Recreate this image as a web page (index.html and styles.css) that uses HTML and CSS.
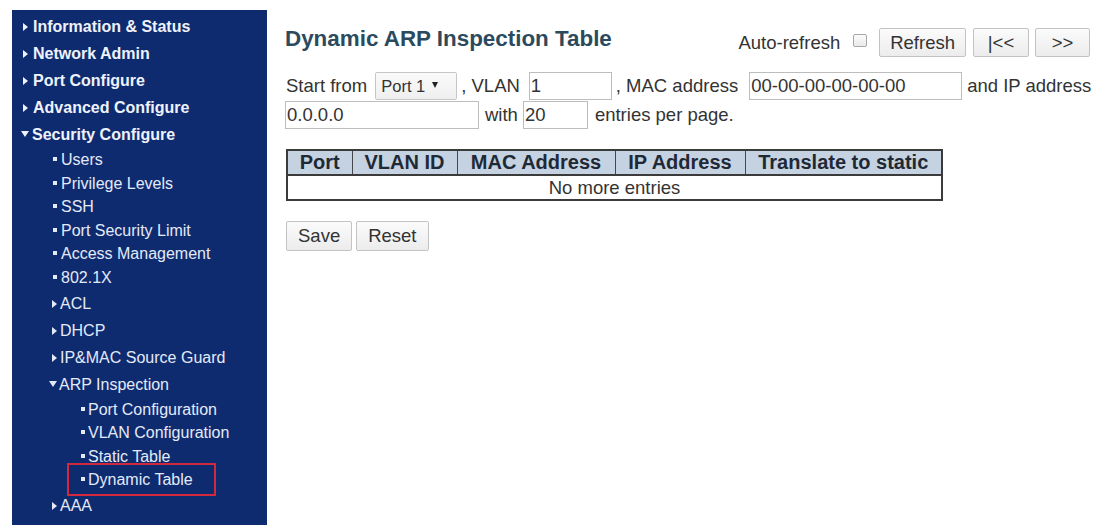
FILE: index.html
```html
<!DOCTYPE html>
<html lang="en">
<head>
<meta charset="utf-8">
<title>Dynamic ARP Inspection Table</title>
<link rel="stylesheet" href="styles.css">
</head>
<body>
<div class="page">
  <nav class="sidebar">
    <ul class="menu">
      <li><div class="row top closed">Information &amp; Status</div></li>
      <li><div class="row top closed">Network Admin</div></li>
      <li><div class="row top closed">Port Configure</div></li>
      <li><div class="row top closed">Advanced Configure</div></li>
      <li>
        <div class="row top open">Security Configure</div>
        <ul class="sub">
          <li><div class="row leaf2">Users</div></li>
          <li><div class="row leaf2">Privilege Levels</div></li>
          <li><div class="row leaf2">SSH</div></li>
          <li><div class="row leaf2">Port Security Limit</div></li>
          <li><div class="row leaf2">Access Management</div></li>
          <li><div class="row leaf2">802.1X</div></li>
          <li><div class="row folder closed">ACL</div></li>
          <li><div class="row folder closed">DHCP</div></li>
          <li><div class="row folder closed">IP&amp;MAC Source Guard</div></li>
          <li>
            <div class="row folder open">ARP Inspection</div>
            <ul class="sub3">
              <li><div class="row leaf3">Port Configuration</div></li>
              <li><div class="row leaf3">VLAN Configuration</div></li>
              <li><div class="row leaf3">Static Table</div></li>
              <li><div class="row leaf3 current">Dynamic Table</div></li>
            </ul>
          </li>
          <li><div class="row folder closed">AAA</div></li>
        </ul>
      </li>
    </ul>
  </nav>

  <main class="main">
    <div class="title-row">
      <h1 class="title">Dynamic ARP Inspection Table</h1>
      <div class="controls">
        <span class="auto-label">Auto-refresh</span>
        <input type="checkbox" class="check">
        <button class="btn btn-refresh">Refresh</button>
        <button class="btn btn-first">|&lt;&lt;</button>
        <button class="btn btn-next">&gt;&gt;</button>
      </div>
    </div>

    <div class="filter-row first-row">
      <span class="lbl lbl-start">Start from</span>
      <span class="select-wrap"><select class="sel"><option>Port 1</option></select></span>
      <span class="lbl lbl-vlan">, VLAN</span>
      <input class="field f-vlan" type="text" value="1">
      <span class="lbl lbl-mac">, MAC address</span>
      <input class="field f-mac" type="text" value="00-00-00-00-00-00">
      <span class="lbl lbl-ip">and IP address</span>
    </div>
    <div class="filter-row">
      <input class="field f-ip" type="text" value="0.0.0.0">
      <span class="lbl lbl-with">with</span>
      <input class="field f-count" type="text" value="20">
      <span class="lbl lbl-per">entries per page.</span>
    </div>

    <table class="arp-table">
      <colgroup>
        <col class="c-port">
        <col class="c-vlan">
        <col class="c-mac">
        <col class="c-ip">
        <col class="c-static">
      </colgroup>
      <thead>
        <tr><th>Port</th><th>VLAN ID</th><th>MAC Address</th><th>IP Address</th><th>Translate to static</th></tr>
      </thead>
      <tbody>
        <tr><td class="empty" colspan="5">No more entries</td></tr>
      </tbody>
    </table>

    <div class="actions">
      <button class="btn btn-big">Save</button>
      <button class="btn btn-big">Reset</button>
    </div>
  </main>
</div>
</body>
</html>
```

FILE: styles.css
```css
html, body {
  margin: 0;
  background: #ffffff;
}

body {
  font-family: "Liberation Sans", Arial, sans-serif;
  color: #333333;
}

.page {
  display: flex;
  align-items: flex-start;
  padding: 10px 0 0 12px;
}

/* ---------- sidebar ---------- */
.sidebar {
  width: 255px;
  background: #0f2b70;
  padding: 3px 0 6px;
}

.menu,
.menu ul {
  list-style: none;
  margin: 0;
  padding: 0;
}

.sub {
  padding-top: 2px;
}

.row {
  display: block;
  white-space: nowrap;
  font-size: 16px;
  color: #e3eaf7;
}

.row::before {
  content: "";
  display: inline-block;
}

.row.top {
  height: 27px;
  line-height: 27px;
  font-weight: bold;
  color: #eef2fb;
}

.row.top.closed {
  padding-left: 11px;
}
.row.top.closed::before,
.row.folder.closed::before {
  width: 0;
  height: 0;
  border-left: 5px solid currentColor;
  border-top: 4.5px solid transparent;
  border-bottom: 4.5px solid transparent;
  vertical-align: 1px;
}
.row.top.closed::before {
  margin-right: 5px;
}

.row.top.open {
  padding-left: 9px;
}
.row.top.open::before,
.row.folder.open::before {
  width: 0;
  height: 0;
  border-top: 6px solid currentColor;
  border-left: 4.5px solid transparent;
  border-right: 4.5px solid transparent;
  vertical-align: 3px;
}
.row.top.open::before {
  margin-right: 3px;
}

.row.leaf2,
.row.leaf3 {
  height: 23.6px;
  line-height: 23.6px;
}
.row.leaf2 {
  padding-left: 41px;
}
.row.leaf2::before,
.row.leaf3::before {
  width: 4px;
  height: 4px;
  background: currentColor;
  vertical-align: 4px;
}
.row.leaf2::before {
  margin-right: 4px;
}

.row.folder {
  height: 27px;
  line-height: 27px;
}
.row.folder.closed {
  padding-left: 40px;
}
.row.folder.closed::before {
  margin-right: 3px;
}
.row.folder.open {
  padding-left: 37px;
}
.row.folder.open::before {
  margin-right: 2px;
}

.row.leaf3 {
  padding-left: 69px;
}
.row.leaf3::before {
  margin-right: 3px;
}

.row.current {
  position: relative;
}
.row.current::after {
  content: "";
  position: absolute;
  left: 55px;
  top: -5px;
  width: 149px;
  height: 33px;
  box-sizing: border-box;
  border: 2px solid #d3293f;
}

/* ---------- main ---------- */
.main {
  width: 808px;
  margin-left: 18px;
  font-size: 18.5px;
}

.title-row {
  display: flex;
  justify-content: space-between;
  align-items: flex-start;
  height: 29px;
  margin-top: 18px;
}

.title {
  margin: 0;
  font-size: 22.4px;
  line-height: 22px;
  font-weight: bold;
  color: #2c4a5e;
}

.controls {
  display: flex;
  align-items: center;
  height: 29px;
  margin-right: 3px;
}

.auto-label {
  line-height: 29px;
}

.check {
  appearance: none;
  -webkit-appearance: none;
  align-self: flex-start;
  width: 14px;
  height: 13px;
  box-sizing: border-box;
  margin: 6px 12px 0 13px;
  border: 1px solid #a8a8a8;
  border-radius: 2px;
  background: linear-gradient(#fbfbfb, #e9e9e9);
}

.btn {
  height: 29px;
  box-sizing: border-box;
  padding: 0 11px;
  font-family: "Liberation Sans", Arial, sans-serif;
  font-size: 18.5px;
  color: #333333;
  background: linear-gradient(#fbfbfb, #ececec);
  border: 1px solid #c3c3c3;
  border-radius: 2px;
}

.btn-refresh {
  padding: 0 10px;
}
.btn-first {
  width: 56px;
  padding: 0;
  margin-left: 7px;
}
.btn-next {
  width: 55px;
  padding: 0;
  margin-left: 6px;
}

.filter-row {
  display: flex;
  align-items: flex-start;
  height: 29px;
  line-height: 28px;
  white-space: nowrap;
}
.first-row {
  margin-top: 15px;
}

.lbl-start { margin-left: 1px; }
.select-wrap {
  position: relative;
  margin-left: 8px;
}
.select-wrap::after {
  content: "";
  position: absolute;
  left: 57px;
  top: 10px;
  border-top: 6px solid #222222;
  border-left: 3.5px solid transparent;
  border-right: 3.5px solid transparent;
  pointer-events: none;
}
.sel {
  appearance: none;
  -webkit-appearance: none;
  width: 82px;
  height: 28px;
  box-sizing: border-box;
  margin: 0;
  padding: 0 0 0 5px;
  font-family: "Liberation Sans", Arial, sans-serif;
  font-size: 16.5px;
  color: #333333;
  background: linear-gradient(#fafafa, #efefef);
  border: 1px solid #c6c6c6;
  border-radius: 2px;
}

.lbl-vlan { margin-left: 4px; }
.lbl-mac { margin-left: 4px; }
.lbl-ip { margin-left: 5px; }
.lbl-with { margin-left: 6px; }
.lbl-per { margin-left: 7px; }

.field {
  height: 28px;
  box-sizing: border-box;
  margin: 0;
  padding: 0 1px;
  font-family: "Liberation Sans", Arial, sans-serif;
  font-size: 18.5px;
  color: #333333;
  background: #ffffff;
  border: 1px solid #bdbdbd;
  border-radius: 0;
  outline: none;
}
.f-vlan { width: 83px; margin-left: 9px; }
.f-mac { width: 213px; margin-left: 11px; }
.f-ip { width: 194px; }
.f-count { width: 65px; margin-left: 5px; }

/* ---------- table ---------- */
.arp-table {
  margin: 19px 0 0 1px;
  width: 655px;
  table-layout: fixed;
  border-collapse: collapse;
  border: 2px solid #3b3b3b;
}
.c-port { width: 65px; }
.c-vlan { width: 105px; }
.c-mac { width: 158px; }
.c-ip { width: 130px; }
.c-static { width: 197px; }

.arp-table th {
  height: 22px;
  padding: 0;
  font-size: 20px;
  font-weight: bold;
  color: #1f2935;
  text-align: center;
  white-space: nowrap;
  background: #c5d2e1;
  border: 1px solid #474747;
  border-top: 2px solid #3b3b3b;
  border-bottom: 2px solid #3b3b3b;
}

.arp-table td.empty {
  height: 23px;
  padding: 0;
  font-size: 18.5px;
  color: #333333;
  text-align: center;
  background: #ffffff;
}

.actions {
  display: flex;
  gap: 4px;
  margin: 20px 0 0 1px;
}
.btn-big {
  height: 30px;
}
```
